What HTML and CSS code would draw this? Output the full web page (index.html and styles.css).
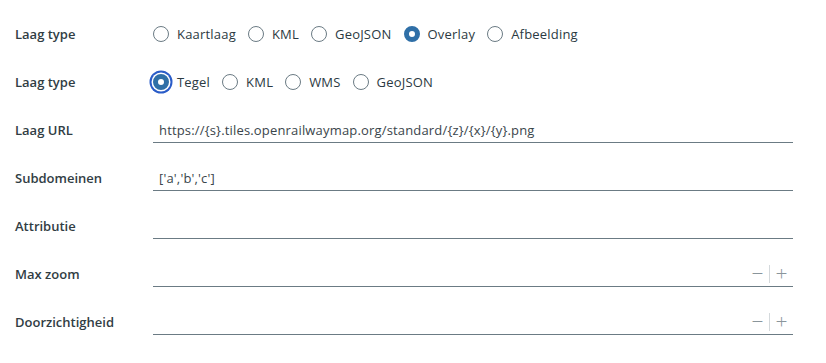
FILE: index.html
```html
<!DOCTYPE html>
<html lang="nl">
<head>
    <meta charset="UTF-8">
    <title>Laag instellingen</title>
    <link rel="stylesheet" href="styles.css">
</head>
<body>
    <form class="layer-form">
        <div class="row">
            <label class="row-label">Laag type</label>
            <div class="radios">
                <span class="radio"><span class="dot"></span>Kaartlaag</span>
                <span class="radio"><span class="dot"></span>KML</span>
                <span class="radio"><span class="dot"></span>GeoJSON</span>
                <span class="radio checked"><span class="dot"></span>Overlay</span>
                <span class="radio"><span class="dot"></span>Afbeelding</span>
            </div>
        </div>

        <div class="row">
            <label class="row-label">Laag type</label>
            <div class="radios">
                <span class="radio checked focus"><span class="dot"></span>Tegel</span>
                <span class="radio"><span class="dot"></span>KML</span>
                <span class="radio"><span class="dot"></span>WMS</span>
                <span class="radio"><span class="dot"></span>GeoJSON</span>
            </div>
        </div>

        <div class="row">
            <label class="row-label">Laag URL</label>
            <div class="field">https://{s}.tiles.openrailwaymap.org/standard/{z}/{x}/{y}.png</div>
        </div>

        <div class="row">
            <label class="row-label">Subdomeinen</label>
            <div class="field">['a','b','c']</div>
        </div>

        <div class="row">
            <label class="row-label">Attributie</label>
            <div class="field"></div>
        </div>

        <div class="row">
            <label class="row-label">Max zoom</label>
            <div class="field number">
                <span class="step">&minus;</span><span class="sep"></span><span class="step">+</span>
            </div>
        </div>

        <div class="row">
            <label class="row-label">Doorzichtigheid</label>
            <div class="field number">
                <span class="step">&minus;</span><span class="sep"></span><span class="step">+</span>
            </div>
        </div>
    </form>
</body>
</html>
```

FILE: styles.css
```css
:root {
    --text: #2b3a42;
    --line: #6b7b84;
    --blue: #2f6fa7;
    --focus: #2a5cc8;
}

body {
    margin: 0;
    font-family: "Open Sans", "Lato", sans-serif;
    font-size: 13px;
    color: var(--text);
    background: white;
}

.layer-form {
    padding: 10px 0 0 15px;
    width: 778px;
}

.row {
    display: grid;
    grid-template-columns: 138px 1fr;
    align-items: center;
    height: 48px;
}

.row-label {
    font-weight: 600;
    color: #313d44;
}

.radios {
    display: flex;
    align-items: center;
    gap: 12px;
    letter-spacing: 0.2px;
}

.radio {
    display: flex;
    align-items: center;
    gap: 8px;
}

.dot {
    width: 16px;
    height: 16px;
    box-sizing: border-box;
    border: 1px solid var(--line);
    border-radius: 50%;
    background: white;
}

.radio.checked .dot {
    border: 5.5px solid var(--blue);
}

.radio.focus .dot {
    box-shadow: 0 0 0 1.5px white, 0 0 0 3.5px var(--focus);
}

.field {
    height: 24px;
    border-bottom: 1px solid var(--line);
    display: flex;
    align-items: center;
    padding: 0 6px;
    color: #3a454b;
    letter-spacing: 0.17px;
}

.field.number {
    justify-content: flex-end;
    padding-right: 5px;
}

.step {
    color: #8a959b;
    font-size: 21px;
    font-weight: 300;
    line-height: 1;
    width: 13px;
    text-align: center;
}

.sep {
    width: 1px;
    height: 18px;
    background: #d4d9dc;
    margin: 0 5px;
}
```
